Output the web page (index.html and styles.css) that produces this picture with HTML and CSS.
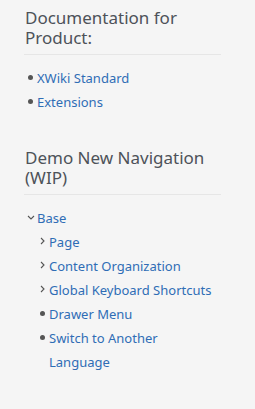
FILE: index.html
```html
<!DOCTYPE html>
<html lang="en">
<head>
  <meta charset="UTF-8">
  <title>Navigation</title>
  <link rel="stylesheet" href="styles.css">
</head>
<body>
  <div class="panel">
    <h2 class="panel-title">Documentation for Product:</h2>
    <ul class="nav">
      <li><span class="dot"></span><a href="#">XWiki Standard</a></li>
      <li><span class="dot"></span><a href="#">Extensions</a></li>
    </ul>
  </div>

  <div class="panel">
    <h2 class="panel-title">Demo New Navigation (WIP)</h2>
    <ul class="nav">
      <li>
        <span class="toggle"><svg width="8" height="5" viewBox="0 0 8 5"><path d="M1 1l3 3 3-3" fill="none" stroke="#555" stroke-width="1.1"/></svg></span><a href="#">Base</a>
        <ul class="nav sub">
          <li><span class="toggle"><svg width="5" height="8" viewBox="0 0 5 8"><path d="M1 1l3 3-3 3" fill="none" stroke="#555" stroke-width="1.1"/></svg></span><a href="#">Page</a></li>
          <li><span class="toggle"><svg width="5" height="8" viewBox="0 0 5 8"><path d="M1 1l3 3-3 3" fill="none" stroke="#555" stroke-width="1.1"/></svg></span><a href="#">Content Organization</a></li>
          <li><span class="toggle"><svg width="5" height="8" viewBox="0 0 5 8"><path d="M1 1l3 3-3 3" fill="none" stroke="#555" stroke-width="1.1"/></svg></span><a href="#">Global Keyboard Shortcuts</a></li>
          <li><span class="dot"></span><a href="#">Drawer Menu</a></li>
          <li><span class="dot"></span><a href="#">Switch to Another Language</a></li>
        </ul>
      </li>
    </ul>
  </div>
</body>
</html>
```

FILE: styles.css
```css
body {
  margin: 0;
  padding: 8px 34px 0 24px;
  background-color: #f5f5f5;
  font-family: 'Noto Sans', 'Open Sans', sans-serif;
}
.panel { margin-bottom: 34px; }
.panel-title {
  margin: 0;
  padding: 0 0 6px 1px;
  font-size: 17px;
  font-weight: normal;
  line-height: 20px;
  color: #4d5259;
  border-bottom: 1px solid #e6e6e6;
}
.nav {
  list-style: none;
  margin: 11px 0 0;
  padding: 0;
  font-size: 13px;
  line-height: 24px;
}
.nav.sub { margin: 0 0 0 12px; }
.nav li { display: flex; flex-wrap: wrap; }
.nav li > a { flex: 1; }
.nav.sub { flex-basis: 100%; }
.nav a {
  color: #2f6db5;
  text-decoration: none;
}
.dot, .toggle {
  width: 13px;
  height: 24px;
  display: flex;
  align-items: center;
  justify-content: center;
  flex-shrink: 0;
}
.dot::before {
  content: "";
  width: 5px;
  height: 5px;
  margin-top: -1px;
  border-radius: 50%;
  background: #555;
}
.toggle svg { display: block; margin-top: -2px; }
```
